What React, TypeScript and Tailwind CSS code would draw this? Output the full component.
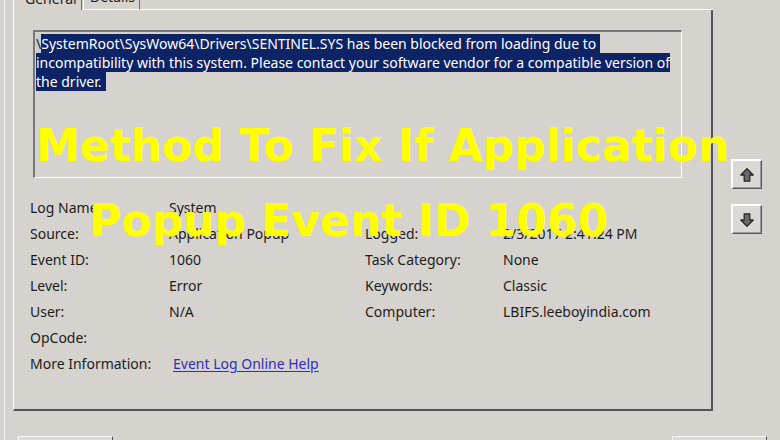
const rowsLeft: [string, string][] = [
  ["Log Name:", "System"],
  ["Source:", "Application Popup"],
  ["Event ID:", "1060"],
  ["Level:", "Error"],
  ["User:", "N/A"],
  ["OpCode:", ""],
];

const rowsRight: [string, string][] = [
  ["", ""],
  ["Logged:", "2/3/2017 2:41:24 PM"],
  ["Task Category:", "None"],
  ["Keywords:", "Classic"],
  ["Computer:", "LBIFS.leeboyindia.com"],
];

function ArrowIcon({ down }: { down?: boolean }) {
  return (
    <svg width="14" height="14" viewBox="0 0 14 14" className={down ? "rotate-180" : ""}>
      <polygon
        points="7,0.8 13.2,7 9.8,7 9.8,13.2 4.2,13.2 4.2,7 0.8,7"
        fill="#6a6a6a"
        stroke="#262626"
        strokeWidth="1.3"
        strokeLinejoin="round"
      />
    </svg>
  );
}

function ArrowButton({ down }: { down?: boolean }) {
  return (
    <div className="w-[31px] h-[30px] flex items-center justify-center bg-[#dcd9d4] border-t-2 border-l-2 border-white border-r border-b border-r-[#5a5a5a] border-b-[#5a5a5a] shadow-[inset_-1px_-1px_0_#9a9a9a]">
      <ArrowIcon down={down} />
    </div>
  );
}

function Row({ label, value, wide }: { label: string; value: string; wide?: boolean }) {
  return (
    <div className="flex h-[26px] items-center">
      <div className={wide ? "w-[139px]" : "w-[138px]"}>{label}</div>
      <div className="whitespace-nowrap">{value}</div>
    </div>
  );
}

export default function App() {
  return (
    <div className="relative w-[780px] h-[440px] overflow-hidden bg-[#d6d3ce] text-[#1c1c1c] font-['Noto_Sans',sans-serif] text-[14px]">
      <div className="ml-[4px] h-full border-l border-[#f4f3f1] flex flex-col">
        <div className="flex">
          {/* tab control */}
          <div className="ml-[8px] w-[700px] flex flex-col">
            <div className="flex h-[10px]">
              <div className="w-[69px] h-[10px] border-l border-white border-r border-r-[#6e6e6e] overflow-hidden relative">
                <span className="absolute left-[11px] bottom-[4px] leading-[14px] whitespace-nowrap">General</span>
              </div>
              <div className="ml-[1px] w-[57px] h-[10px] border-l border-white border-r border-r-[#6e6e6e] border-b border-b-white overflow-hidden relative">
                <span className="absolute left-[6px] bottom-[5px] leading-[14px] whitespace-nowrap">Details</span>
              </div>
              <div className="flex-1 h-[10px] border-b border-white"></div>
            </div>
            <div className="h-[401px] border-l border-white border-r-2 border-b-2 border-r-[#555] border-b-[#555] pt-[20px]">
              {/* description box */}
              <div className="ml-[19px] w-[649px] h-[148px] border-t-2 border-l-2 border-t-[#777] border-l-[#777] border-r border-b border-white pl-[1px] pt-[2px]">
                <div className="leading-[19px] whitespace-nowrap">
                  <div>
                    <span className="inline-block h-[19px] bg-[#c9cdd8] text-[#222]">\</span>
                    <span className="inline-block h-[19px] bg-[#0c2466] text-white pr-[4px]">SystemRoot\SysWow64\Drivers\SENTINEL.SYS has been blocked from loading due to</span>
                  </div>
                  <div>
                    <span className="inline-block h-[19px] bg-[#0c2466] text-white">incompatibility with this system. Please contact your software vendor for a compatible version of</span>
                  </div>
                  <div>
                    <span className="inline-block h-[19px] bg-[#0c2466] text-white pr-[4px]">the driver.</span>
                  </div>
                </div>
              </div>
              {/* properties */}
              <div className="ml-[16px] mt-[16px] flex">
                <div className="w-[335px] flex flex-col">
                  {rowsLeft.map(([l, v]) => (
                    <Row key={l} label={l} value={v} wide />
                  ))}
                  <div className="flex h-[26px] items-center">
                    <div className="w-[143px]">More Information:</div>
                    <span className="text-[#2e2ec0] underline underline-offset-2">Event Log Online Help</span>
                  </div>
                </div>
                <div className="flex flex-col">
                  {rowsRight.map(([l, v], i) => (
                    <Row key={i} label={l} value={v} />
                  ))}
                </div>
              </div>
            </div>
          </div>
          {/* arrows */}
          <div className="ml-[18px] pt-[159px] flex flex-col gap-[15px]">
            <ArrowButton />
            <ArrowButton down />
          </div>
        </div>
        <div className="mt-[25px] flex justify-between pl-[13px] pr-[13px]">
          <div className="w-[95px] h-[24px] bg-[#dedbd6] border-t border-l border-[#f8f8f6] border-r border-r-[#555]"></div>
          <div className="w-[95px] h-[24px] bg-[#dedbd6] border-t border-l border-[#f8f8f6] border-r border-r-[#555]"></div>
        </div>
      </div>

      {/* overlay title */}
      <div className="absolute left-[36px] top-[121px] text-[#ffff00] font-['DejaVu_Sans',sans-serif] font-bold text-[44px] leading-[50px] whitespace-nowrap">
        Method To Fix If Application
      </div>
      <div className="absolute left-[89px] top-[196px] text-[#ffff00] font-['DejaVu_Sans',sans-serif] font-bold text-[44px] leading-[50px] whitespace-nowrap">
        Popup Event ID 1060
      </div>
    </div>
  );
}
